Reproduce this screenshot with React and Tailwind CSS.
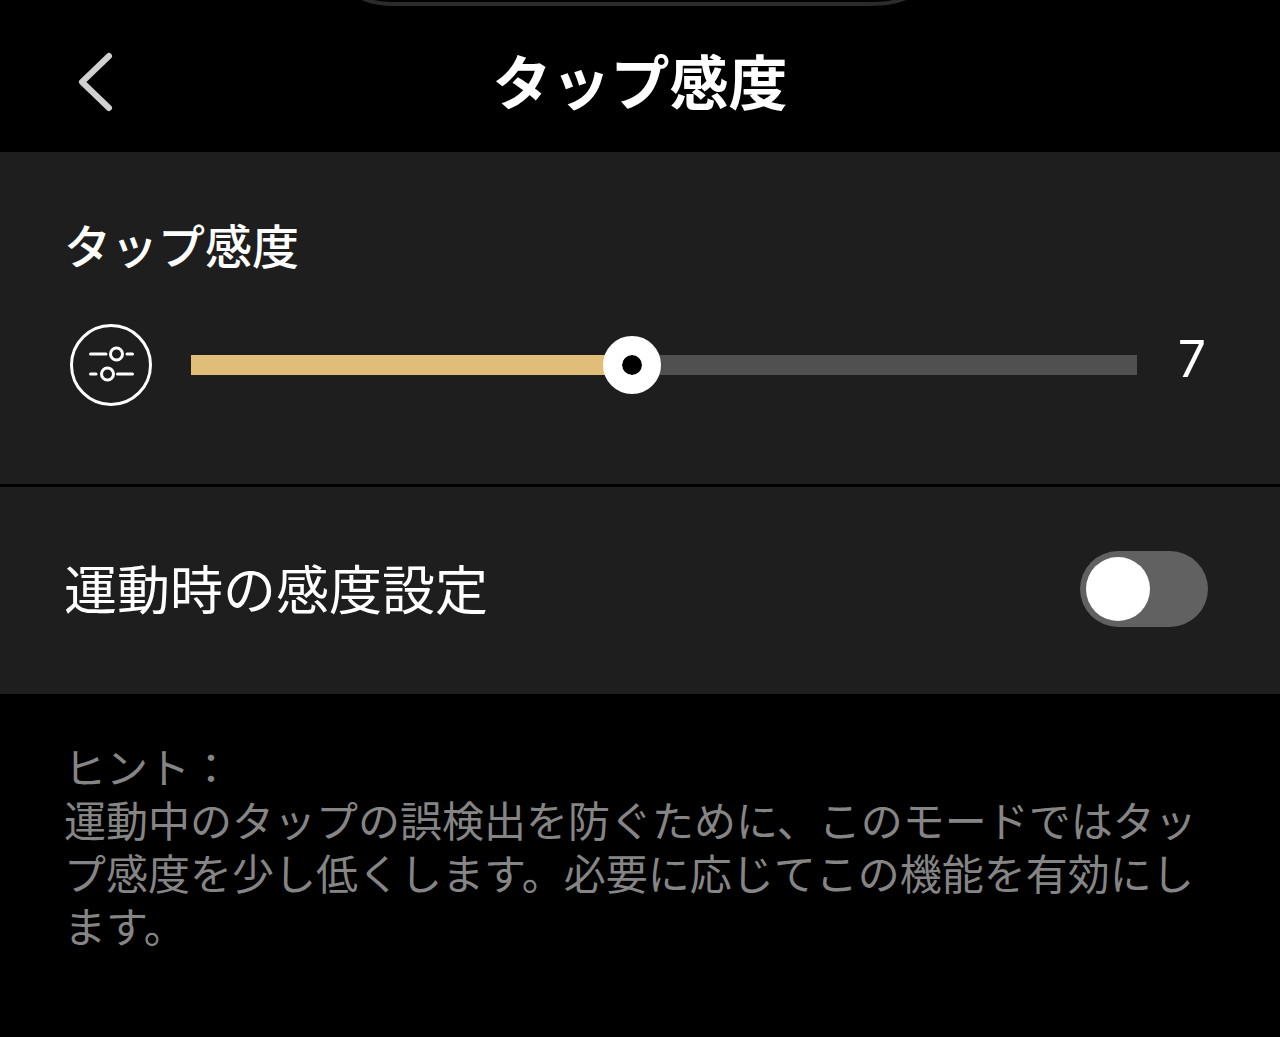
import React, { useState } from "react";

const MAX_LEVEL = 15;

const Header = ({ title }) => (
  <header className="relative grid h-[152px] grid-cols-[1fr_auto_1fr] items-center px-16 pt-3">
    {/* Bottom edge of the camera island */}
    <svg
      className="absolute inset-x-0 top-0 mx-auto"
      width="560"
      height="8"
      viewBox="0 0 560 8"
      fill="none"
      aria-hidden="true"
    >
      <path d="M2 -2 C12 3 22 4 36 4 H508 C524 4 534 3 546 -2" stroke="#2b2b2b" strokeWidth="4" />
    </svg>

    <button type="button" aria-label="戻る" className="w-16 cursor-pointer">
      <svg width="64" height="64" viewBox="0 0 64 64" fill="none" aria-hidden="true">
        <path
          d="M45 6 L18 32 L45 58"
          stroke="#d0d0d0"
          strokeWidth="6"
          strokeLinecap="round"
          strokeLinejoin="round"
        />
      </svg>
    </button>
    <h1 className="pb-1 text-[59px] leading-[80px] font-bold">{title}</h1>
  </header>
);

const SlidersIcon = () => (
  <svg
    className="shrink-0"
    width="82"
    height="82"
    viewBox="0 0 82 82"
    fill="none"
    stroke="white"
    strokeWidth="3"
    strokeLinecap="round"
    aria-hidden="true"
  >
    <circle cx="41" cy="41" r="39.5" />
    <path d="M20.500 30 H36 M57 30 H62.500" />
    <circle cx="46.500" cy="30" r="6" />
    <path d="M20.500 50 H26 M47.500 50 H62.500" />
    <circle cx="37.500" cy="50" r="6" />
  </svg>
);

const LevelSlider = ({ value, onChange }) => (
  <div className="relative h-5 flex-1 bg-[#505050]">
    <div className="h-full bg-[#e0bd79]" style={{ width: `${(value / MAX_LEVEL) * 100}%` }} />
    {/* Wider than the bar by half a thumb on each side */}
    <input
      id="level"
      type="range"
      min="0"
      max={MAX_LEVEL}
      value={value}
      onChange={(e) => onChange(Number(e.target.value))}
      className="absolute -inset-x-[29px] -inset-y-5 cursor-pointer appearance-none bg-transparent [&::-webkit-slider-thumb]:size-[58px] [&::-webkit-slider-thumb]:appearance-none [&::-webkit-slider-thumb]:rounded-full [&::-webkit-slider-thumb]:border-[19px] [&::-webkit-slider-thumb]:border-white [&::-webkit-slider-thumb]:bg-black [&::-webkit-slider-thumb]:bg-clip-padding"
    />
  </div>
);

const App = () => {
  const [level, setLevel] = useState(7);
  const [sportMode, setSportMode] = useState(false);

  return (
    <div
      lang="ja"
      className="min-h-screen bg-black font-['Noto_Sans_CJK_JP',sans-serif] text-white"
    >
      <Header title="タップ感度" />

      <main>
        {/* Sensitivity */}
        <section className="bg-[#1e1e1e] pt-[62px] pr-[72px] pb-[78px] pl-16">
          <label htmlFor="level" className="block text-[47px] leading-[60px] font-medium">
            タップ感度
          </label>
          <div className="mt-[50px] flex items-center pl-[6px]">
            <SlidersIcon />
            <div className="flex flex-1 pl-[39px]">
              <LevelSlider value={level} onChange={setLevel} />
            </div>
            <output
              htmlFor="level"
              className="w-[71px] pr-[2px] pb-3 text-right font-[Inter,sans-serif] text-[50px] leading-[60px]"
            >
              {level}
            </output>
          </div>
        </section>

        {/* Workout mode */}
        <section className="mt-[3px] flex h-[207px] items-center justify-between bg-[#1e1e1e] pr-[72px] pb-1 pl-16">
          <label htmlFor="sport" className="pb-1 text-[53px] leading-[80px]">
            運動時の感度設定
          </label>
          <input
            id="sport"
            type="checkbox"
            role="switch"
            checked={sportMode}
            onChange={(e) => setSportMode(e.target.checked)}
            className="flex h-[76px] w-32 cursor-pointer appearance-none items-center rounded-full bg-[#616161] px-[6px] before:size-16 before:rounded-full before:bg-white checked:justify-end checked:bg-[#e0bd79]"
          />
        </section>

        <p className="px-16 py-[45px] text-[42px] leading-[53px] text-[#858585]">
          ヒント：
          <br />
          運動中のタップの誤検出を防ぐために、このモードではタップ感度を少し低くします。必要に応じてこの機能を有効にします。
        </p>
      </main>
    </div>
  );
};

export default App;
